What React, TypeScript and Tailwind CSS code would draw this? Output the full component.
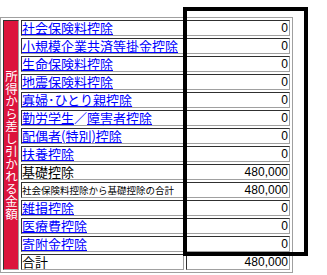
import React from "react";

type Row = { label: React.ReactNode; value: string };

const linkCls = "text-[#0000ff] underline decoration-[#0000ff] underline-offset-[1px]";

const rows: Row[] = [
  { label: <a className={linkCls}>社会保険料控除</a>, value: "0" },
  { label: <a className={linkCls}>小規模企業共済等掛金控除</a>, value: "0" },
  { label: <a className={linkCls}>生命保険料控除</a>, value: "0" },
  { label: <a className={linkCls}>地震保険料控除</a>, value: "0" },
  { label: <a className={linkCls}>寡婦･ひとり親控除</a>, value: "0" },
  {
    label: (
      <>
        <a className={linkCls}>勤労学生</a>
        <span className="text-[#0000ff]">／</span>
        <a className={linkCls}>障害者控除</a>
      </>
    ),
    value: "0",
  },
  { label: <a className={linkCls}>配偶者(特別)控除</a>, value: "0" },
  { label: <a className={linkCls}>扶養控除</a>, value: "0" },
  { label: <span className="text-black">基礎控除</span>, value: "480,000" },
  {
    label: <span className="text-black text-[9.5px] leading-[12px]">社会保険料控除から基礎控除の合計</span>,
    value: "480,000",
  },
  { label: <a className={linkCls}>雑損控除</a>, value: "0" },
  { label: <a className={linkCls}>医療費控除</a>, value: "0" },
  { label: <a className={linkCls}>寄附金控除</a>, value: "0" },
  { label: <span className="text-black">合計</span>, value: "480,000" },
];

const cellBorder =
  "border border-t-[#303030] border-l-[#303030] border-b-[#a0a0a0] border-r-[#a0a0a0]";

export default function App() {
  return (
    <div className="relative w-[327px] h-[275px] bg-white overflow-hidden">
      <div className="pt-[17px]">
        <div className="grid w-fit grid-cols-[16px_163px_104px] grid-rows-[repeat(14,16px)] gap-[2px] p-[2px] border border-[#a0a0a0] bg-white">
          <div
            className={`row-span-14 ${cellBorder} bg-[#dc143c] flex items-center justify-center`}
          >
            <span
              className="[writing-mode:vertical-rl] text-white text-[12.5px] leading-[14px]"
              style={{ fontFamily: '"Noto Sans CJK JP", sans-serif' }}
            >
              所得から差し引かれる金額
            </span>
          </div>
          {rows.map((r, i) => (
            <React.Fragment key={i}>
              <div
                className={`${cellBorder} flex items-center whitespace-nowrap text-[13px] leading-[14px]`}
                style={{ fontFamily: '"Noto Sans CJK JP", sans-serif' }}
              >
                {r.label}
              </div>
              <div
                className={`${cellBorder} flex items-center justify-end pr-[1px] text-[12px] leading-[14px] text-black`}
                style={{ fontFamily: '"Liberation Sans", Arial, sans-serif' }}
              >
                {r.value}
              </div>
            </React.Fragment>
          ))}
        </div>
      </div>
      <div className="absolute left-[183px] top-[7px] w-[125px] h-[249px] border-4 border-black pointer-events-none" />
    </div>
  );
}
